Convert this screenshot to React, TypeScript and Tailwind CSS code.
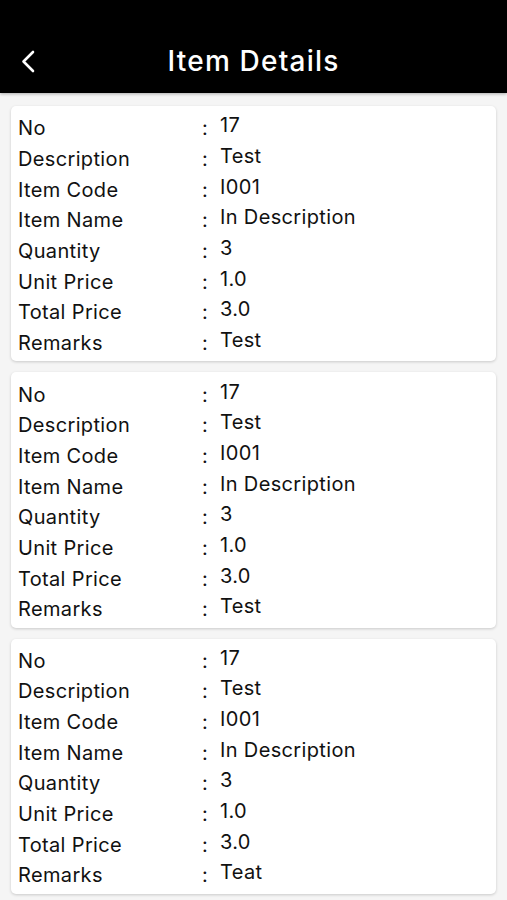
import React from 'react';

type Item = {
  no: string;
  description: string;
  code: string;
  name: string;
  quantity: string;
  unitPrice: string;
  totalPrice: string;
  remarks: string;
};

const items: Item[] = [
  { no: '17', description: 'Test', code: 'I001', name: 'In Description', quantity: '3', unitPrice: '1.0', totalPrice: '3.0', remarks: 'Test' },
  { no: '17', description: 'Test', code: 'I001', name: 'In Description', quantity: '3', unitPrice: '1.0', totalPrice: '3.0', remarks: 'Test' },
  { no: '17', description: 'Test', code: 'I001', name: 'In Description', quantity: '3', unitPrice: '1.0', totalPrice: '3.0', remarks: 'Teat' },
];

const Row: React.FC<{ label: string; value: string }> = ({ label, value }) => (
  <div className="flex h-[30.66px] items-center">
    <span className="w-[184px] shrink-0">{label}</span>
    <span className="w-[18px] shrink-0">:</span>
    <span className="pb-[6px]">{value}</span>
  </div>
);

const ItemCard: React.FC<{ item: Item }> = ({ item }) => (
  <div className="rounded-[5px] bg-white pl-[7px] pt-[7px] pb-[3px] shadow-[0_1px_3px_rgba(0,0,0,0.18)]">
    <Row label="No" value={item.no} />
    <Row label="Description" value={item.description} />
    <Row label="Item Code" value={item.code} />
    <Row label="Item Name" value={item.name} />
    <Row label="Quantity" value={item.quantity} />
    <Row label="Unit Price" value={item.unitPrice} />
    <Row label="Total Price" value={item.totalPrice} />
    <Row label="Remarks" value={item.remarks} />
  </div>
);

export default function App() {
  return (
    <div className="min-h-[900px] bg-[#f5f5f5] font-['Inter',sans-serif] text-[20px] tracking-[0.35px] text-[#111]">
      <header className="relative flex h-[93px] items-center justify-center bg-black pt-[29px] shadow-[0_1px_3px_rgba(0,0,0,0.3)]">
        <button className="absolute left-[19px] top-[50px] text-white">
          <svg width="18" height="23" viewBox="0 0 18 23" fill="none">
            <path d="M14 2 L4.5 11.5 L14 21" stroke="white" strokeWidth="2.6" strokeLinecap="round" strokeLinejoin="round" />
          </svg>
        </button>
        <h1 className="text-[28px] font-medium tracking-[1.2px] text-white">Item Details</h1>
      </header>
      <main className="flex flex-col gap-[11px] px-[11px] pt-[13px]">
        {items.map((item, i) => (
          <ItemCard key={i} item={item} />
        ))}
      </main>
    </div>
  );
}
